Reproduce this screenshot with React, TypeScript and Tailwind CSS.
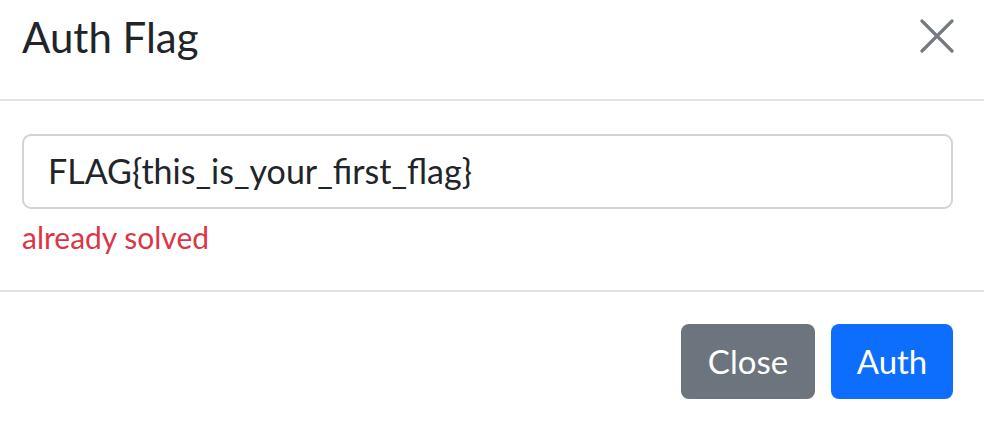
import React from "react";

export default function App() {
  return (
    <div
      className="w-[984px] h-[435px] bg-white text-[#212529] overflow-hidden"
      style={{ fontFamily: "Lato, 'Noto Sans', sans-serif" }}
    >
      <div className="h-[101px] border-b-2 border-[#dee2e6] flex items-start justify-between pl-[22px] pr-[30px]">
        <div className="text-[42px] leading-none mt-[16px]">Auth Flag</div>
        <svg width="34" height="34" viewBox="0 0 34 34" className="mt-[19px]">
          <path d="M2 2 L32 32 M32 2 L2 32" stroke="#747a80" strokeWidth="3.2" strokeLinecap="round" />
        </svg>
      </div>
      <div className="h-[191px] border-b-2 border-[#dee2e6] px-[22px] pt-[33px]">
        <div className="w-[931px] h-[75px] border-2 border-[#ced4da] rounded-[9px] flex items-center pl-[24px] text-[34px] pb-[2px]">
          FLAG{"{"}this_is_your_first_flag{"}"}
        </div>
        <div className="mt-[13px] text-[30px] leading-none text-[#dc3545]">already solved</div>
      </div>
      <div className="flex justify-end gap-[16px] pr-[31px] pt-[32px]">
        <div className="w-[134px] h-[75px] rounded-[8px] bg-[#6c757d] text-white text-[33px] flex items-center justify-center">
          Close
        </div>
        <div className="w-[122px] h-[75px] rounded-[8px] bg-[#0d6efd] text-white text-[33px] flex items-center justify-center">
          Auth
        </div>
      </div>
    </div>
  );
}
